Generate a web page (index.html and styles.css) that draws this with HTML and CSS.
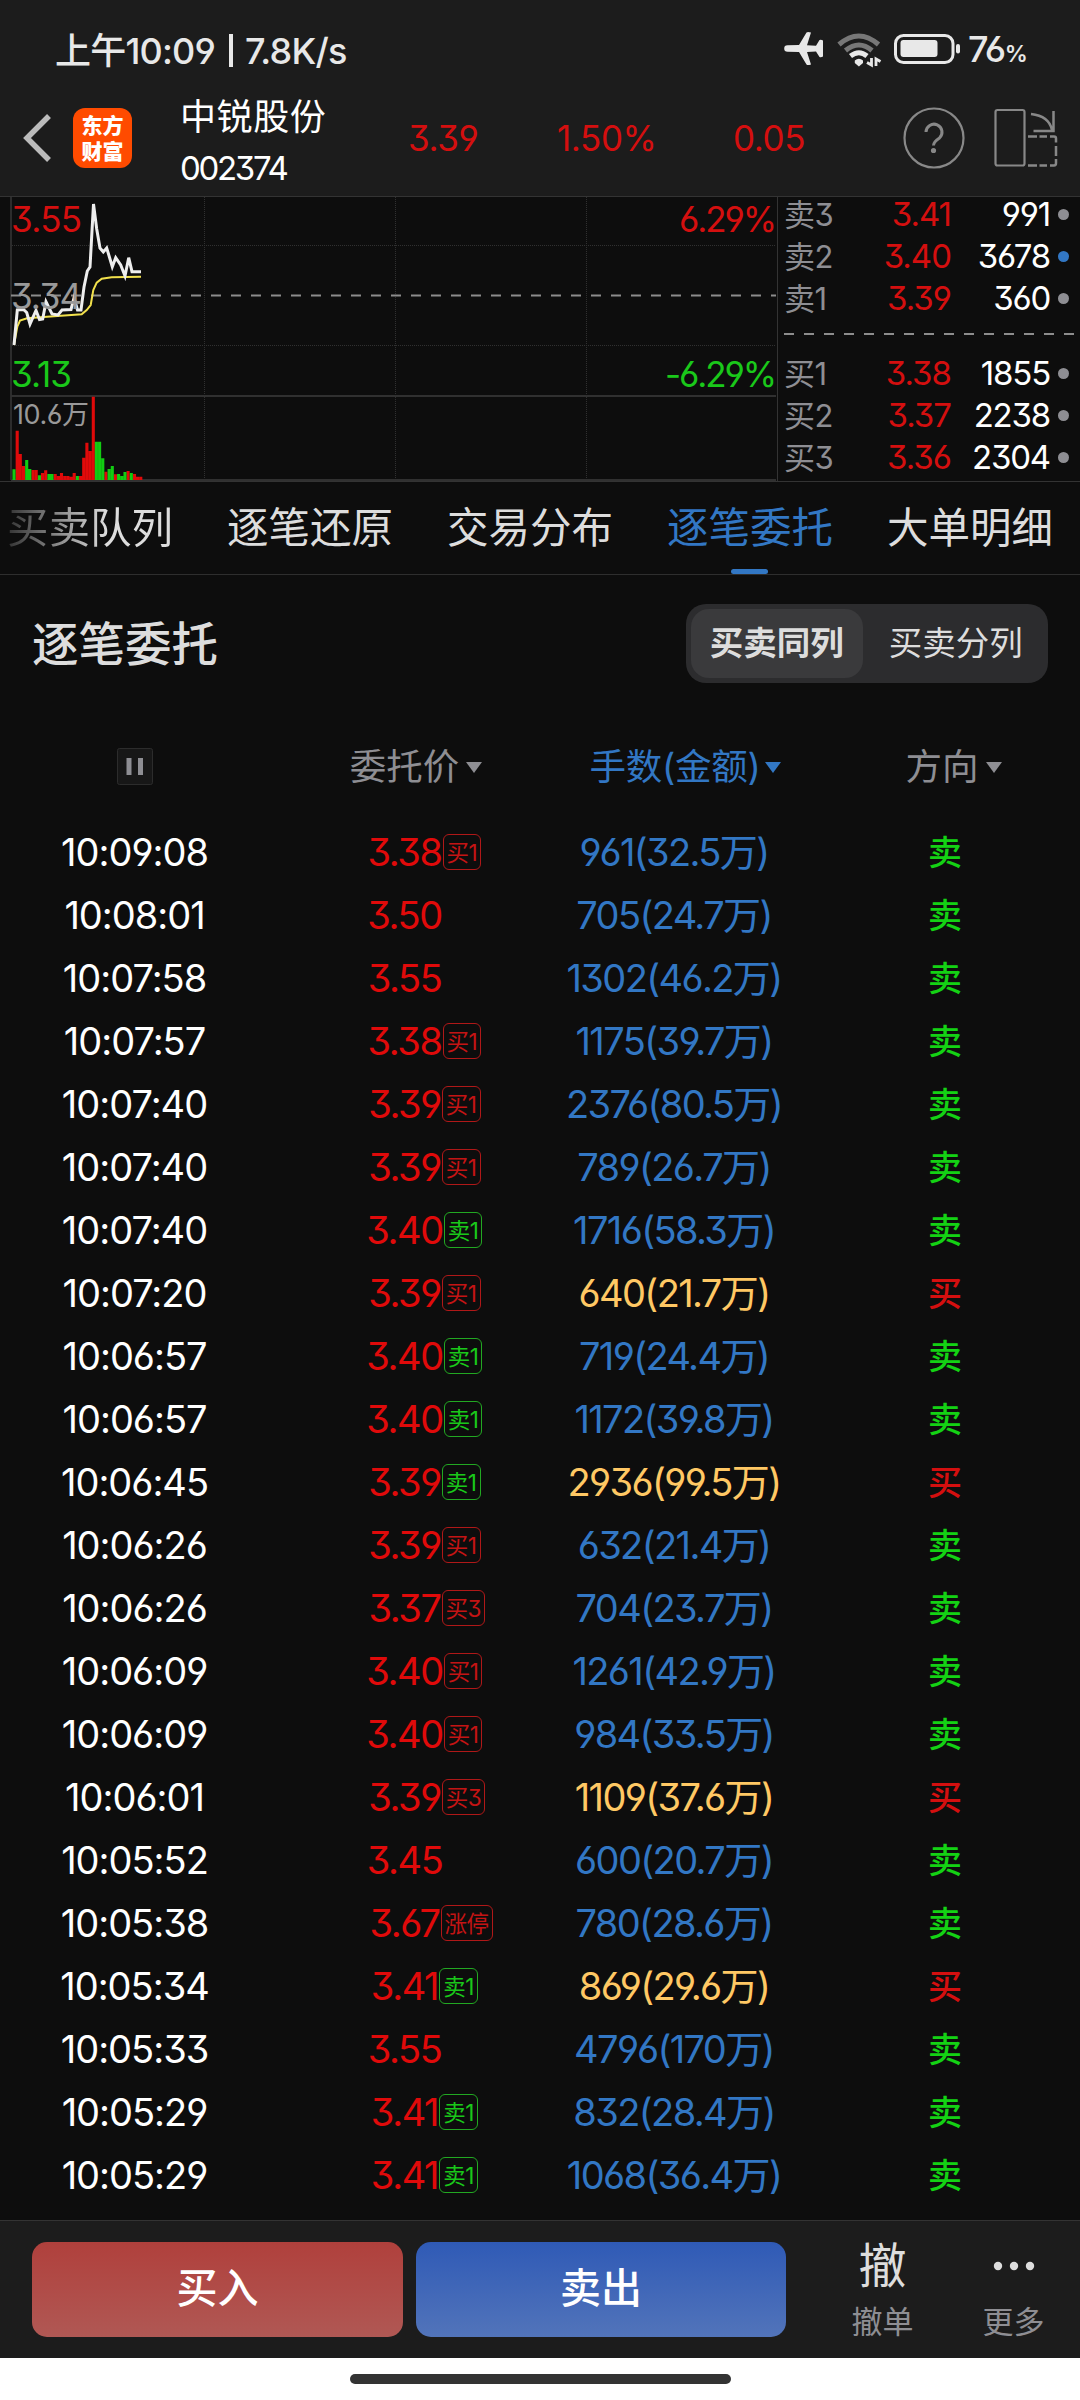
FILE: index.html
```html
<!DOCTYPE html>
<html lang="zh-CN">
<head>
    <meta charset="UTF-8">
    <title>逐笔委托</title>
    <link rel="stylesheet" href="styles.css">
</head>
<body>
    <div class="top">
        <div class="status">
            <span class="clock">上午10:09<u></u>7.8K/s</span>
            <svg class="status-icons" width="180" height="40" viewBox="784 30 180 40">
                <path fill="#e8e8e8" d="M788.500 46.200L800 46 807.500 33.500Q808.500 32.700 812 33.500L808 46.300 817 46.800 820.500 41Q822 40.300 824 41.500V57.500Q822 58.800 820.500 58L817 52.500 808 53 812 65.500Q808.500 66.500 807.500 65.500L800 53 788.500 52.800A3.300 3.300 0 0 1 788.500 46.200z"/>
                <g fill="none" stroke-width="5">
                    <path stroke="#777" d="M840 45.500q19.800-17 39.500 0M846.500 51.500q13.500-11 26.500 0"/>
                    <path stroke="#e8e8e8" stroke-width="5" d="M851.500 57q8.500-6.500 16.500 0"/>
                </g>
                <path fill="#e8e8e8" d="M855.800 61.500q4.200-3.500 8.200 0v2.500l-4.100 3.500-4.100-3.500z"/>
                <path fill="none" stroke="#e8e8e8" stroke-width="2.800" d="M872.500 59v7l-4.500-2.500M877 67v-7l4.500 2.500"/>
                <rect x="896.500" y="36.500" width="57.500" height="27" rx="8" fill="none" stroke="#e8e8e8" stroke-width="3"/>
                <rect x="901.500" y="41" width="37" height="17" rx="3" fill="#e8e8e8"/>
                <rect x="957" y="45" width="4" height="9.500" rx="2" fill="#e8e8e8"/>
            </svg>
            <span class="power">76<small>%</small></span>
        </div>
        <div class="header">
            <svg class="back" width="30" height="52" viewBox="0 0 30 52"><path d="M27 4L5 26l22 22" fill="none" stroke="#bbb" stroke-width="5.500"/></svg>
            <div class="logo">
                <div>东方</div>
                <div>财富</div>
            </div>
            <div class="stock">
                <div class="name">中锐股份</div>
                <div class="code">002374</div>
            </div>
            <div class="quote">
                <span>3.39</span>
                <span>1.50%</span>
                <span>0.05</span>
            </div>
            <svg class="tools" width="156" height="64" viewBox="902 105 156 64" fill="none" stroke="#888" stroke-width="2.200">
                <circle cx="934" cy="137" r="29.500"/>
                <path stroke-width="3" d="M926 131a8 8 0 1 1 13.500 6q-6 4-6 7.500"/>
                <circle cx="933.500" cy="149.500" r="1.500" fill="#888"/>
                <rect x="995.500" y="109" width="29" height="55.500" rx="2"/>
                <path stroke-width="2.500" d="M1031 113q18 2 21 16M1053.500 110v20h-20"/>
                <path stroke-width="2.500" d="M1028 135.500h9M1039.500 135.500h7.500M1050 135.500h4q2 0 2 2v4M1056 145v10M1056 158v4q0 2.500-2 2.500h-4M1047 164.500h-7.500M1037 164.500h-9"/>
            </svg>
        </div>
    </div>

    <div class="market">
        <svg class="chart" width="777" height="284" viewBox="0 197 777 284">
            <g stroke="#303030" stroke-dasharray="1 1" fill="none">
                <path d="M12 245.500H776M12 345.500H776M204.500 197V480M395.500 197V480M586.500 197V480"/>
            </g>
            <path d="M11 197V480" stroke="#2c2c2c" stroke-width="2"/>
            <path d="M11 396H776M11 480H776" stroke="#303030" stroke-width="2"/>
            <path d="M11 295.500H776" stroke="#8c8c8c" stroke-dasharray="10 10" stroke-width="2"/>
            <path class="avg" d="M14 345L17.300 326.700 20 320.500 27 318.300 47 316.700 81.700 314.300 86.700 310 90.700 305 93.300 290 96.700 282.700 101.700 278.700 111.700 277.300 141 276.800"/>
            <path class="price-line" d="M14 345L17.300 310 23.500 309.500 26.700 312.500 30 324 36 310.500 39.500 319.500 42.700 319 46 301.700 52 314 58 315 62 310 71 309.500 74 298 77.500 310 81 310 84 287 87.300 271 90 267 93.500 204 96.700 229 100 248 103.300 252 106.700 248 112.300 266.700 115.700 257.700 120.700 265 125 276 128.700 257.700 132 271.700 141 271.700"/>
            <!-- 成交量 -->
            <path class="vol up" d="M17.200 480V430.700M20.300 480V454M23.500 480V466M33 480V470M36.200 480V470M42.500 480V473M45.700 480V470.300M55.200 480V474M58.400 480V476M61.500 480V473M64.700 480V476M67.900 480V476M71.100 480V476.700M74.200 480V473M80.600 480V476M83.700 480V457.700M86.900 480V442.700M90.100 480V451M93.300 480V396.700M105.900 480V471.700M115.400 480V474.300M128.100 480V471M134.500 480V474M137.600 480V476.700M140.800 480V476.700"/>
            <path class="vol down" d="M14 480V469.300M26.700 480V460M29.800 480V469M39.400 480V475.300M48.900 480V474M52 480V474M77.400 480V476M96.400 480V441.700M99.600 480V441.700M102.800 480V458.300M109.100 480V469M112.300 480V466M118.600 480V474M121.800 480V476M125 480V472M131.300 480V473"/>
            <text class="c-red" x="11" y="231.500" textLength="71">3.55</text>
            <text class="c-gray" x="11" y="308.500" textLength="71">3.34</text>
            <text class="c-green" x="11" y="386.500" textLength="61">3.13</text>
            <text class="c-red" x="679" y="231.500" textLength="98">6.29%</text>
            <text class="c-green" x="665" y="386.500" textLength="112">-6.29%</text>
            <text class="c-gray small" x="13" y="424" textLength="76">10.6万</text>
        </svg>
        <div class="book">
            <div class="level"><span>卖3</span><b>3.41</b><em>991</em><i></i></div>
            <div class="level"><span>卖2</span><b>3.40</b><em>3678</em><i class="on"></i></div>
            <div class="level"><span>卖1</span><b>3.39</b><em>360</em><i></i></div>
            <div class="split"></div>
            <div class="level"><span>买1</span><b>3.38</b><em>1855</em><i></i></div>
            <div class="level"><span>买2</span><b>3.37</b><em>2238</em><i></i></div>
            <div class="level"><span>买3</span><b>3.36</b><em>2304</em><i></i></div>
        </div>
    </div>

    <div class="tabs">
        <span class="fade">买卖队列</span>
        <span>逐笔还原</span>
        <span>交易分布</span>
        <span class="active">逐笔委托</span>
        <span>大单明细</span>
    </div>

    <div class="title">
        <h2>逐笔委托</h2>
        <div class="switch">
            <span class="selected">买卖同列</span>
            <span>买卖分列</span>
        </div>
    </div>

    <div class="row head">
        <span><svg class="pause" width="36" height="37" viewBox="0 0 36 37"><rect x=".5" y=".5" width="35" height="36" rx="2" fill="#171717" stroke="#2c2c2c"/><path d="M12 10v17M23.500 10v17" stroke="#8e8e93" stroke-width="5"/></svg></span>
        <span class="sort sort-price">委托价<u></u></span>
        <span class="sort sort-amount">手数(金额)<u></u></span>
        <span class="sort">方向<u></u></span>
    </div>
    <div class="list">
        <div class="row"><span>10:09:08</span><span class="price">3.38<i class="tag">买1</i></span><span class="amount">961(32.5万)</span><span class="sell">卖</span></div>
        <div class="row"><span>10:08:01</span><span class="price">3.50</span><span class="amount">705(24.7万)</span><span class="sell">卖</span></div>
        <div class="row"><span>10:07:58</span><span class="price">3.55</span><span class="amount">1302(46.2万)</span><span class="sell">卖</span></div>
        <div class="row"><span>10:07:57</span><span class="price">3.38<i class="tag">买1</i></span><span class="amount">1175(39.7万)</span><span class="sell">卖</span></div>
        <div class="row"><span>10:07:40</span><span class="price">3.39<i class="tag">买1</i></span><span class="amount">2376(80.5万)</span><span class="sell">卖</span></div>
        <div class="row"><span>10:07:40</span><span class="price">3.39<i class="tag">买1</i></span><span class="amount">789(26.7万)</span><span class="sell">卖</span></div>
        <div class="row"><span>10:07:40</span><span class="price">3.40<i class="tag green">卖1</i></span><span class="amount">1716(58.3万)</span><span class="sell">卖</span></div>
        <div class="row"><span>10:07:20</span><span class="price">3.39<i class="tag">买1</i></span><span class="amount big">640(21.7万)</span><span class="buy">买</span></div>
        <div class="row"><span>10:06:57</span><span class="price">3.40<i class="tag green">卖1</i></span><span class="amount">719(24.4万)</span><span class="sell">卖</span></div>
        <div class="row"><span>10:06:57</span><span class="price">3.40<i class="tag green">卖1</i></span><span class="amount">1172(39.8万)</span><span class="sell">卖</span></div>
        <div class="row"><span>10:06:45</span><span class="price">3.39<i class="tag green">卖1</i></span><span class="amount big">2936(99.5万)</span><span class="buy">买</span></div>
        <div class="row"><span>10:06:26</span><span class="price">3.39<i class="tag">买1</i></span><span class="amount">632(21.4万)</span><span class="sell">卖</span></div>
        <div class="row"><span>10:06:26</span><span class="price">3.37<i class="tag">买3</i></span><span class="amount">704(23.7万)</span><span class="sell">卖</span></div>
        <div class="row"><span>10:06:09</span><span class="price">3.40<i class="tag">买1</i></span><span class="amount">1261(42.9万)</span><span class="sell">卖</span></div>
        <div class="row"><span>10:06:09</span><span class="price">3.40<i class="tag">买1</i></span><span class="amount">984(33.5万)</span><span class="sell">卖</span></div>
        <div class="row"><span>10:06:01</span><span class="price">3.39<i class="tag">买3</i></span><span class="amount big">1109(37.6万)</span><span class="buy">买</span></div>
        <div class="row"><span>10:05:52</span><span class="price">3.45</span><span class="amount">600(20.7万)</span><span class="sell">卖</span></div>
        <div class="row"><span>10:05:38</span><span class="price">3.67<i class="tag">涨停</i></span><span class="amount">780(28.6万)</span><span class="sell">卖</span></div>
        <div class="row"><span>10:05:34</span><span class="price">3.41<i class="tag green">卖1</i></span><span class="amount big">869(29.6万)</span><span class="buy">买</span></div>
        <div class="row"><span>10:05:33</span><span class="price">3.55</span><span class="amount">4796(170万)</span><span class="sell">卖</span></div>
        <div class="row"><span>10:05:29</span><span class="price">3.41<i class="tag green">卖1</i></span><span class="amount">832(28.4万)</span><span class="sell">卖</span></div>
        <div class="row"><span>10:05:29</span><span class="price">3.41<i class="tag green">卖1</i></span><span class="amount">1068(36.4万)</span><span class="sell">卖</span></div>
    </div>

    <div class="footer">
        <div class="btn btn-buy">买入</div>
        <div class="btn btn-sell">卖出</div>
        <div class="action">
            <div class="action-icon">撤</div>
            <div>撤单</div>
        </div>
        <div class="action">
            <div class="action-icon"><svg width="42" height="10" viewBox="0 0 42 10" fill="#ddd"><circle cx="5" cy="5" r="4.200"/><circle cx="21" cy="5" r="4.200"/><circle cx="37" cy="5" r="4.200"/></svg></div>
            <div>更多</div>
        </div>
    </div>
    <div class="home"><div class="home-bar"></div></div>
</body>
</html>
```
FILE: styles.css
```css
*{
    margin:0;
    padding:0;
    box-sizing:border-box;
}
body{
    width:1080px;
    height:2400px;
    overflow:hidden;
    background-color:#0d0d0d;
    color:#fff;
    font-family:Inter,"Noto Sans CJK SC",sans-serif;
    font-feature-settings:"cv03","cv04","cv09","calt" 0;
}
i,em{
    font-style:normal;
}
svg{
    display:block;
}

/* 顶部 */
.top{
    height:197px;
    background-color:#1c1c1c;
    border-bottom:1px solid #333;
}
.status{
    display:flex;
    align-items:center;
    height:98px;
    padding:0 48px 0 55px;
    color:#e8e8e8;
    font-size:36px;
    font-weight:500;
}
.clock{
    flex:1;
    padding-bottom:3px;
    letter-spacing:-.8px;
    white-space:nowrap;
}
.clock u{
    display:inline-block;
    width:4px;
    height:33px;
    margin:0 12px 0 14px;
    background-color:#e8e8e8;
    vertical-align:-3px;
}
.power{
    width:64px;
    margin-left:5px;
    padding-bottom:1px;
    letter-spacing:-1.5px;
    white-space:nowrap;
}
.power small{
    font-size:23px;
    font-weight:600;
}
.header{
    display:flex;
    align-items:center;
    height:79px;
    padding-left:22px;
}
.logo{
    width:59px;
    height:60px;
    margin-left:21px;
    padding-top:3px;
    border-radius:12px;
    background-color:#ff4b00;
    font-family:"Noto Sans CJK SC",sans-serif;
    font-size:21px;
    font-weight:900;
    text-align:center;
}
.logo div{
    height:26px;
    line-height:26px;
}
.stock{
    width:228px;
    margin-left:48px;
    padding-top:9px;
}
.name{
    font-size:36px;
    line-height:51px;
    letter-spacing:.6px;
}
.code{
    font-size:33px;
    line-height:50px;
    letter-spacing:-2.3px;
}
.quote{
    display:grid;
    grid-template-columns:149px 176px 1fr;
    width:494px;
    color:#d40f0f;
    font-size:35px;
    letter-spacing:-.4px;
}

/* 分时图和五档 */
.market{
    display:flex;
    height:285px;
    border-bottom:1px solid #333;
}
.chart{
    font-size:35px;
}
.chart .small{
    font-size:27px;
}
.avg{
    fill:none;
    stroke:#f2e14c;
    stroke-width:2;
}
.price-line{
    fill:none;
    stroke:#eee;
    stroke-width:3;
}
.vol{
    stroke-width:3.1;
}
.vol.up{
    stroke:#e00a0a;
}
.vol.down{
    stroke:#12cc12;
}
.c-red{
    fill:#d40f0f;
}
.c-green{
    fill:#1ac81a;
}
.c-gray{
    fill:#999;
}
.book{
    flex:1;
    display:flex;
    flex-direction:column;
    gap:7px;
    padding-left:6px;
    border-left:1px solid #333;
}
.level{
    display:grid;
    grid-template-columns:76px 91px 99px 19px;
    align-items:center;
    height:35px;
    font-size:33px;
    line-height:35px;
    letter-spacing:-1.2px;
    text-align:right;
}
.level span{
    color:#8e8e93;
    font-size:31px;
    text-align:left;
    letter-spacing:-.5px;
}
.level b{
    color:#d40f0f;
    font-weight:400;
    letter-spacing:-1px;
}
.level i{
    width:11px;
    height:11px;
    margin-left:8px;
    border-radius:50%;
    background-color:#8e8e93;
}
.level .on{
    background-color:#3277c4;
}
.split{
    height:2px;
    margin:10px 6px 14px 0;
    background:repeating-linear-gradient(to right,#8c8c8c 0,#8c8c8c 10px,transparent 10px,transparent 20px);
}

/* 标签栏 */
.tabs{
    display:flex;
    justify-content:space-between;
    height:93px;
    padding:0 27px 0 7px;
    border-bottom:1px solid #2e2e2e;
    color:#ddd;
    font-size:41.500px;
    line-height:92px;
}
.tabs span{
    display:flex;
    flex-direction:column;
    align-items:center;
    height:92px;
    white-space:nowrap;
}
.tabs .fade{
    color:transparent;
    background:linear-gradient(to right,#333,#ddd 60%);
    -webkit-background-clip:text;
    background-clip:text;
}
.tabs .active{
    color:#3277c4;
}
.tabs .active::after{
    content:"";
    width:37px;
    height:5px;
    margin-top:-5px;
    border-radius:3px;
    background-color:#3277c4;
}
.title{
    display:flex;
    justify-content:space-between;
    align-items:center;
    height:138px;
    padding:0 32px;
}
.title h2{
    padding-bottom:7px;
    color:#ddd;
    font-size:46.500px;
    font-weight:500;
}
.switch{
    display:flex;
    width:362px;
    height:79px;
    margin-bottom:1px;
    padding:5px;
    border-radius:20px;
    background-color:#2c2c2e;
    color:#ddd;
    font-size:33.500px;
    line-height:68px;
    text-align:center;
}
.switch span{
    width:173px;
    border-radius:18px;
}
.switch span:last-child{
    width:188px;
    margin-right:-6px;
}
.switch .selected{
    background-color:#3a3a3c;
    font-weight:700;
}

/* 委托列表 */
.row{
    display:grid;
    grid-template-columns:269px 271px 268px 273px;
    align-items:center;
    height:63px;
    margin-right:-1px;
    font-size:38px;
    letter-spacing:-1px;
    line-height:63px;
    text-align:center;
}
.list{
    padding-top:1px;
}
.head{
    height:107px;
    color:#8e8e93;
    font-size:36.500px;
    letter-spacing:0;
}
.head .pause{
    margin:0 auto;
}
.sort{
    display:flex;
    justify-content:center;
    align-items:center;
    padding:2px 0 0 18px;
}
.sort-price{
    padding-left:23px;
}
.sort-amount{
    padding-left:23px;
    color:#3277c4;
    letter-spacing:-.3px;
}
.sort u{
    margin-left:7px;
    border:8px solid transparent;
    border-top:11px solid;
    border-bottom:0;
}
.sort-amount u{
    margin-left:5px;
}
.price{
    display:grid;
    grid-template-columns:1fr auto 1fr;
    align-items:center;
    color:#e00a0a;
    letter-spacing:-1.4px;
}
.price::before{
    content:"";
}
.tag{
    justify-self:start;
    height:36px;
    margin:-2px 0 0 1px;
    padding:0 3px;
    border:1px solid #b01818;
    border-radius:6px;
    color:#c41414;
    font-size:22.500px;
    line-height:35px;
    letter-spacing:-.5px;
}
.tag.green{
    border-color:#22a822;
    color:#1ac81a;
}
.amount{
    color:#3277c4;
    letter-spacing:-1.6px;
}
.amount.big{
    color:#ffc864;
}
.buy,.sell{
    font-size:34px;
    font-weight:500;
}
.buy{
    color:#d40f0f;
}
.sell{
    color:#14d214;
}

/* 底部 */
.footer{
    display:flex;
    height:138px;
    margin-top:13px;
    padding:21px 0 0 32px;
    border-top:1px solid #333;
    background-color:#1c1c1c;
}
.btn{
    width:371px;
    height:95px;
    margin-right:13px;
    border-radius:15px;
    font-size:41px;
    font-weight:500;
    line-height:93px;
    text-align:center;
}
.btn-buy{
    background:linear-gradient(#b0403c,#b05854);
}
.btn-sell{
    width:370px;
    background:linear-gradient(#2f5ab6,#5274ba);
}
.action{
    width:131px;
    color:#8e8e93;
    font-size:31px;
    line-height:50px;
    text-align:center;
}
.action:nth-child(3){
    margin-left:18px;
}
.action-icon{
    display:flex;
    justify-content:center;
    align-items:center;
    height:48px;
    margin-bottom:7px;
    color:#ddd;
    font-size:48px;
}
.home{
    display:flex;
    justify-content:center;
    height:42px;
    padding-top:16px;
    background-color:#fff;
}
.home-bar{
    width:381px;
    height:10px;
    border-radius:5px;
    background-color:#333;
}
```
